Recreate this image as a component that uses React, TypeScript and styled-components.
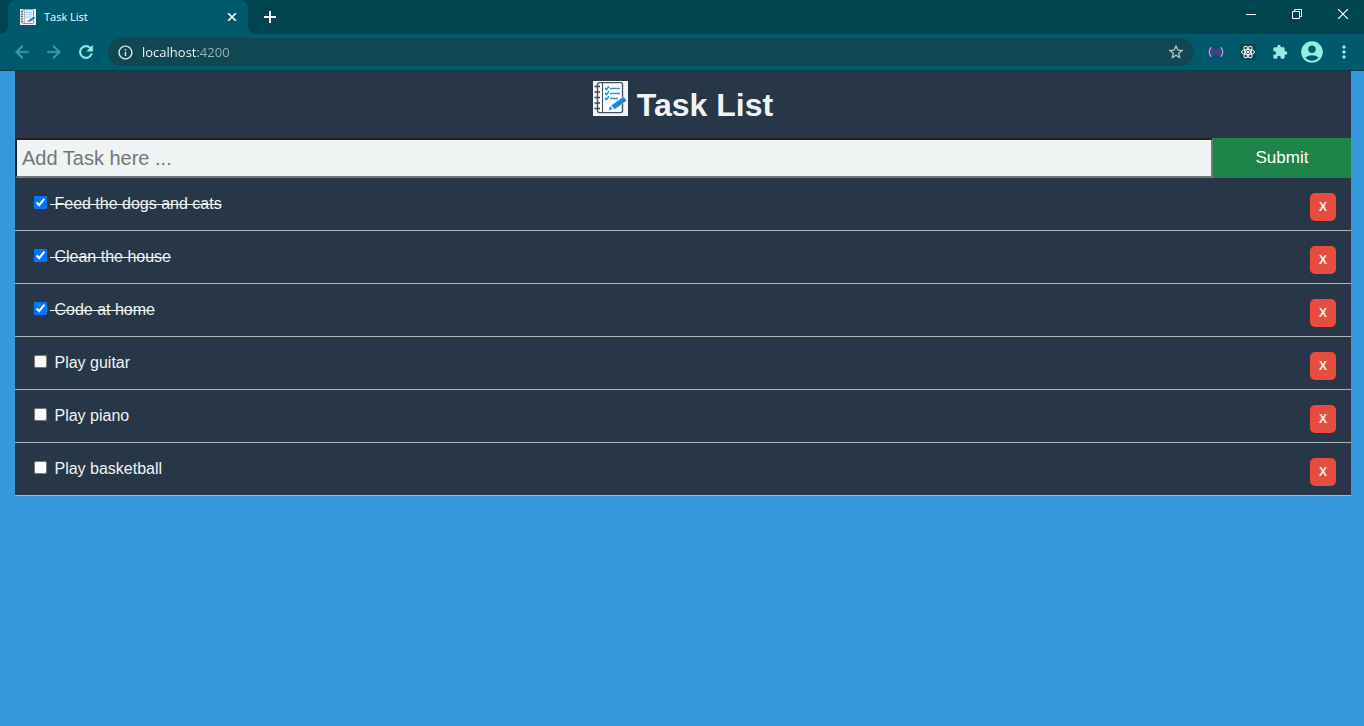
import React, { useState } from "react";
import styled, { createGlobalStyle } from "styled-components";
import {
  MdAccountCircle,
  MdArrowBack,
  MdArrowForward,
  MdClose,
  MdExtension,
  MdInfoOutline,
  MdMoreVert,
  MdRefresh,
  MdStarBorder,
} from "react-icons/md";

const GlobalStyle = createGlobalStyle`
  * { box-sizing: border-box; }
  body {
    margin: 0;
    background: #3498db;
    font-family: "Liberation Sans", Arial, sans-serif;
    font-size: 16px;
  }
  button, input { font-family: inherit; }
`;

const Chrome = styled.header`
  font-family: "Open Sans", "Segoe UI", sans-serif;
  border-bottom: 1px solid #003f4a;
`;

const TabStrip = styled.div`
  display: flex;
  height: 34px;
  padding-left: 8px;
  overflow: hidden;
  background: #00444f;
`;

const Tab = styled.div`
  position: relative;
  display: flex;
  align-items: center;
  width: 240px;
  padding: 0 8px 0 12px;
  border-radius: 8px 8px 0 0;
  background: #005a6b;
  color: #fff;

  &::before,
  &::after {
    content: "";
    position: absolute;
    bottom: 0;
    width: 8px;
    height: 8px;
  }
  &::before {
    left: -8px;
    background: radial-gradient(circle at 0 0, transparent 8px, #005a6b 8px);
  }
  &::after {
    right: -8px;
    background: radial-gradient(circle at 100% 0, transparent 8px, #005a6b 8px);
  }
`;

const TabTitle = styled.span`
  flex: 1;
  margin-left: 8px;
  font-size: 11px;
  font-weight: 500;
  line-height: 16px;
`;

const BareButton = styled.button`
  display: flex;
  align-items: center;
  justify-content: center;
  padding: 0;
  border: 0;
  background: none;
  color: #fff;
`;

const TabClose = styled(BareButton)`
  width: 16px;
  height: 16px;

  path:last-child {
    stroke: currentColor;
    stroke-width: 1px;
  }
`;

const NewTab = styled(BareButton)`
  width: 28px;
  margin-left: 8px;
`;

const WindowControls = styled.div`
  display: flex;
  height: 28px;
  margin-left: auto;
  margin-right: -2px;
`;

const WindowButton = styled(BareButton)`
  width: 46px;
`;

const Toolbar = styled.div`
  display: flex;
  align-items: center;
  height: 36px;
  padding: 0 4px 0 6px;
  background: #005a6b;
`;

const ToolButton = styled(BareButton)<{ $dim?: boolean }>`
  flex: none;
  width: 32px;
  height: 32px;
  color: ${(p) => (p.$dim ? "#3f9ba5" : "#9aeae8")};
`;

const NavButton = styled(ToolButton)`
  path:last-child {
    stroke: currentColor;
    stroke-width: 0.5px;
  }
`;

const Omnibox = styled.div`
  display: flex;
  flex: 1;
  align-items: center;
  height: 28px;
  margin: 0 6px;
  padding: 0 9px;
  border-radius: 14px;
  background: #0f4753;
  color: #dfe7e8;
`;

const Address = styled.input`
  flex: 1;
  min-width: 0;
  margin: 0 8px;
  padding: 0;
  border: 0;
  outline: 0;
  font-size: 13px;
  line-height: 20px;
  color: transparent;
  background: linear-gradient(90deg, #fff 56px, #9fb3b8 56px);
  background-clip: text;
  -webkit-background-clip: text;
`;

const Page = styled.main`
  margin: 0 13px 0 15px;
  background: #283747;
  color: #f0f3f4;
`;

const Title = styled.h1`
  margin: 0;
  padding: 10px 0 14px;
  font-size: 32px;
  text-align: center;
`;

const TaskForm = styled.form`
  display: flex;
  height: 40px;
`;

const TaskInput = styled.input`
  flex: 1;
  min-width: 0;
  padding: 0 5px;
  border: 2px solid;
  border-color: #212121 #767676 #767676 #212121;
  border-radius: 0;
  background: #f0f3f4;
  font-size: 20px;

  &::placeholder {
    color: #757575;
  }
`;

const Submit = styled.button`
  width: 138px;
  padding: 0;
  border: 0;
  background: #1e8449;
  color: #fff;
  font-size: 17px;
`;

const List = styled.ul`
  margin: 0;
  padding: 0;
  list-style: none;
`;

const Item = styled.li`
  display: flex;
  align-items: flex-start;
  justify-content: space-between;
  padding: 15px 15px 9px;
  border-bottom: 1px solid #aab7b8;
`;

const TaskLabel = styled.label<{ $done: boolean }>`
  text-decoration: ${(p) => (p.$done ? "line-through" : "none")};
`;

const Check = styled.input`
  width: 13px;
  height: 13px;
  margin: 3px 3px 3px 4px;
`;

const Remove = styled.button`
  width: 26px;
  height: 28px;
  padding: 0;
  border: 0;
  border-radius: 5px;
  background: #e74c3c;
  color: #f0f3f4;
  font-size: 12px;
  font-weight: bold;
`;

function NotebookIcon({ size }: { size: number }) {
  return (
    <svg width={size} height={size} viewBox="0 0 35 35" fill="none" aria-hidden="true">
      <path fill="#f4f4f6" d="M0 0h35v35H0z" />
      <rect x="4.5" y="1.6" width="25" height="30" rx="2" fill="#fff" stroke="#46505c" strokeWidth="1.4" />
      <path d="M9.5 2v29.500" stroke="#46505c" strokeWidth="1.100" />
      <path d="M1.500 5.500H7M1.500 11H7M1.500 16.500H7M1.500 22H7M1.500 27.500H7" stroke="#3d4650" strokeWidth="1.500" />
      <path d="M17 7.500h10M17 12.500h10M17 17.500h8" stroke="#2a94d8" strokeWidth="1.400" />
      <path
        d="M12 7l1.500 1.600L16 5.600M12 12l1.500 1.600L16 10.600M12 17l1.500 1.600L16 15.600"
        stroke="#1c8ad4"
        strokeWidth="1.500"
      />
      <path d="M15 30l2-5.500L30.500 15l4 4.500-13 9z" fill="#f4f4f6" />
      <path d="M18.500 24.500L30.500 15.800l3 4L21.500 28.300zM15.800 29.200l1.200-4 2.600 2.800z" fill="#168bd6" />
    </svg>
  );
}

function BroadcastIcon() {
  return (
    <svg width="16" height="16" viewBox="0 0 16 16" fill="none" aria-hidden="true">
      <circle cx="8" cy="8" r="1.400" fill="#a21caf" />
      <path d="M5.500 5.200a4 4 0 0 0 0 5.600M10.500 5.200a4 4 0 0 1 0 5.600" stroke="#9b1fb0" strokeWidth="1.400" />
      <path d="M3.200 3.200a7 7 0 0 0 0 9.600M12.800 3.200a7 7 0 0 1 0 9.600" stroke="#c58bd8" strokeWidth="1.400" />
    </svg>
  );
}

function AtomIcon() {
  return (
    <svg width="16" height="16" viewBox="0 0 16 16" fill="none" stroke="#fff" aria-hidden="true">
      <path fill="#0b4450" stroke="none" d="M0 0h16v16H0z" />
      <circle cx="8" cy="8" r="1.300" fill="#fff" stroke="none" />
      <ellipse cx="8" cy="8" rx="6.500" ry="2.500" />
      <ellipse cx="8" cy="8" rx="6.500" ry="2.500" transform="rotate(60 8 8)" />
      <ellipse cx="8" cy="8" rx="6.500" ry="2.500" transform="rotate(120 8 8)" />
    </svg>
  );
}

const initialTasks = [
  { id: 1, title: "Feed the dogs and cats", done: true },
  { id: 2, title: "Clean the house", done: true },
  { id: 3, title: "Code at home", done: true },
  { id: 4, title: "Play guitar", done: false },
  { id: 5, title: "Play piano", done: false },
  { id: 6, title: "Play basketball", done: false },
];

export default function App() {
  const [tasks, setTasks] = useState(initialTasks);
  const [draft, setDraft] = useState("");

  const toggle = (id: number) =>
    setTasks(tasks.map((t) => (t.id === id ? { ...t, done: !t.done } : t)));
  const remove = (id: number) => setTasks(tasks.filter((t) => t.id !== id));
  const add = (e: React.FormEvent) => {
    e.preventDefault();
    if (!draft.trim()) return;
    setTasks([...tasks, { id: Date.now(), title: draft, done: false }]);
    setDraft("");
  };

  return (
    <>
      <GlobalStyle />
      <Chrome>
        <TabStrip>
          <Tab>
            <NotebookIcon size={16} />
            <TabTitle>Task List</TabTitle>
            <TabClose aria-label="Close tab">
              <MdClose size={14} />
            </TabClose>
          </Tab>
          <NewTab aria-label="New tab">
            <svg width="12" height="12" viewBox="0 0 12 12" stroke="#fff" strokeWidth="2" aria-hidden="true">
              <path d="M6 0v12M0 6h12" />
            </svg>
          </NewTab>
          <WindowControls>
            <WindowButton aria-label="Minimize">
              <svg width="10" height="10" viewBox="0 0 10 10" stroke="#fff" aria-hidden="true">
                <path d="M0 5.500h10" />
              </svg>
            </WindowButton>
            <WindowButton aria-label="Restore">
              <svg width="10" height="10" viewBox="0 0 10 10" fill="none" stroke="#fff" aria-hidden="true">
                <path d="M.5 2.500h7v7h-7zM2.500 2.500v-2h7v7h-2" />
              </svg>
            </WindowButton>
            <WindowButton aria-label="Close">
              <svg width="10" height="10" viewBox="0 0 10 10" stroke="#fff" strokeWidth="1.200" aria-hidden="true">
                <path d="M0 0l10 10M10 0L0 10" />
              </svg>
            </WindowButton>
          </WindowControls>
        </TabStrip>
        <Toolbar>
          <NavButton $dim aria-label="Back">
            <MdArrowBack size={20} />
          </NavButton>
          <NavButton $dim aria-label="Forward">
            <MdArrowForward size={20} />
          </NavButton>
          <NavButton aria-label="Reload">
            <MdRefresh size={20} />
          </NavButton>
          <Omnibox>
            <MdInfoOutline size={17} />
            <Address aria-label="Address" defaultValue="localhost:4200" />
            <BareButton aria-label="Bookmark this page">
              <MdStarBorder size={18} color="#c3cbcc" />
            </BareButton>
          </Omnibox>
          <ToolButton aria-label="Broadcast extension">
            <BroadcastIcon />
          </ToolButton>
          <ToolButton aria-label="Developer tools extension">
            <AtomIcon />
          </ToolButton>
          <ToolButton aria-label="Extensions">
            <MdExtension size={16} />
          </ToolButton>
          <ToolButton aria-label="Profile">
            <MdAccountCircle size={26} />
          </ToolButton>
          <ToolButton aria-label="Menu">
            <MdMoreVert size={20} />
          </ToolButton>
        </Toolbar>
      </Chrome>
      <Page>
        <Title>
          <NotebookIcon size={35} /> Task List
        </Title>
        <TaskForm onSubmit={add}>
          <TaskInput
            aria-label="New task"
            placeholder="Add Task here ..."
            value={draft}
            onChange={(e) => setDraft(e.target.value)}
          />
          <Submit type="submit">Submit</Submit>
        </TaskForm>
        <List>
          {tasks.map((t) => (
            <Item key={t.id}>
              <TaskLabel $done={t.done}>
                <Check type="checkbox" checked={t.done} onChange={() => toggle(t.id)} /> {t.title}
              </TaskLabel>
              <Remove aria-label={`Remove ${t.title}`} onClick={() => remove(t.id)}>
                X
              </Remove>
            </Item>
          ))}
        </List>
      </Page>
    </>
  );
}
